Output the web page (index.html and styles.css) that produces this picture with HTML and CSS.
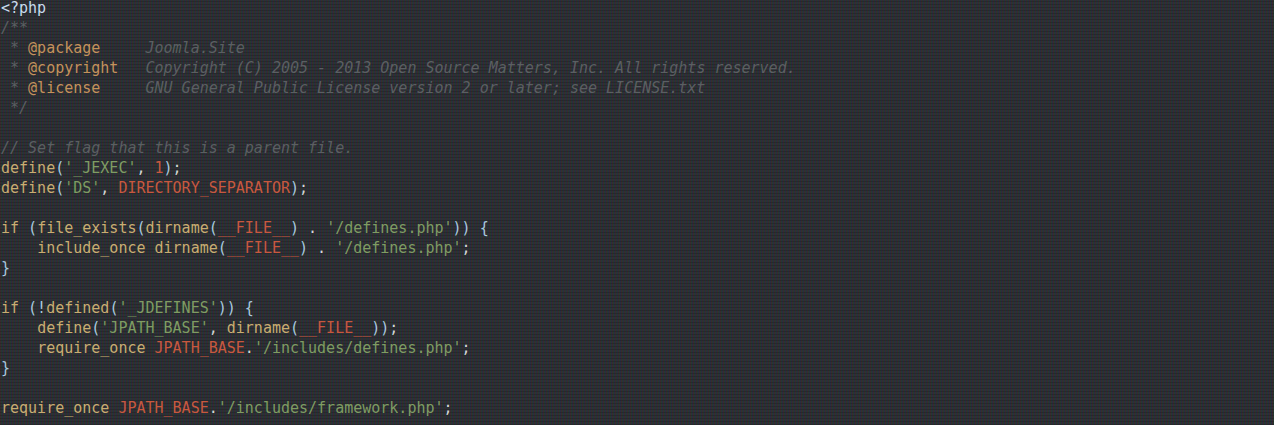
FILE: index.html
```html
<!DOCTYPE html>
<html>
<head>
<meta charset="utf-8">
<link rel="stylesheet" href="styles.css">
</head>
<body>
<pre class="code"><span class="tag">&lt;?php</span>
<span class="cm">/**</span>
<span class="cm"> * </span><span class="doc">@package</span><span class="cm">     Joomla.Site</span>
<span class="cm"> * </span><span class="doc">@copyright</span><span class="cm">   Copyright (C) 2005 - 2013 Open Source Matters, Inc. All rights reserved.</span>
<span class="cm"> * </span><span class="doc">@license</span><span class="cm">     GNU General Public License version 2 or later; see LICENSE.txt</span>
<span class="cm"> */</span>

<span class="cm">// Set flag that this is a parent file.</span>
<span class="fn">define</span><span class="p">(</span><span class="str">'_JEXEC'</span><span class="w">, </span><span class="con">1</span><span class="p">)</span><span class="w">;</span>
<span class="fn">define</span><span class="p">(</span><span class="str">'DS'</span><span class="w">, </span><span class="con">DIRECTORY_SEPARATOR</span><span class="p">)</span><span class="w">;</span>

<span class="fn">if</span> <span class="p">(</span><span class="fn">file_exists</span><span class="p">(</span><span class="fn">dirname</span><span class="p">(</span><span class="con">__FILE__</span><span class="p">)</span> <span class="w">.</span> <span class="str">'/defines.php'</span><span class="p">))</span> <span class="p">{</span>
    <span class="fn">include_once</span> <span class="fn">dirname</span><span class="p">(</span><span class="con">__FILE__</span><span class="p">)</span> <span class="w">.</span> <span class="str">'/defines.php'</span><span class="w">;</span>
<span class="p">}</span>

<span class="fn">if</span> <span class="p">(!</span><span class="fn">defined</span><span class="p">(</span><span class="str">'_JDEFINES'</span><span class="p">))</span> <span class="p">{</span>
    <span class="fn">define</span><span class="p">(</span><span class="str">'JPATH_BASE'</span><span class="w">, </span><span class="fn">dirname</span><span class="p">(</span><span class="con">__FILE__</span><span class="p">))</span><span class="w">;</span>
    <span class="fn">require_once</span> <span class="con">JPATH_BASE</span><span class="w">.</span><span class="str">'/includes/defines.php'</span><span class="w">;</span>
<span class="p">}</span>

<span class="fn">require_once</span> <span class="con">JPATH_BASE</span><span class="w">.</span><span class="str">'/includes/framework.php'</span><span class="w">;</span>
</pre>
</body>
</html>
```
FILE: styles.css
```css
html, body {
  margin: 0;
  padding: 0;
  height: 100%;
}
body {
  background-color: #24292b;
  background-image:
    repeating-linear-gradient(90deg,
      rgba(120, 40, 50, 0.22) 0px, rgba(120, 40, 50, 0.22) 1px,
      rgba(40, 110, 60, 0.18) 1px, rgba(40, 110, 60, 0.18) 2px,
      rgba(50, 50, 130, 0.22) 2px, rgba(50, 50, 130, 0.22) 3px),
    repeating-linear-gradient(0deg,
      rgba(0, 0, 0, 0.18) 0px, rgba(0, 0, 0, 0.18) 1px,
      rgba(255, 255, 255, 0.015) 1px, rgba(255, 255, 255, 0.015) 3px);
  overflow: hidden;
}
.code {
  margin: -2px 0 0 1px;
  padding: 0;
  font-family: "DejaVu Sans Mono", "Liberation Mono", monospace;
  font-size: 15px;
  line-height: 20px;
  color: #c9ad72;
  white-space: pre;
}
.tag { color: #c8dced; }
.cm { color: #5b5f62; font-style: italic; }
.doc { color: #c4925c; }
.fn { color: #c9ad72; }
.p { color: #a9c8df; }
.w { color: #d4d6d6; }
.str { color: #7f9c63; }
.con { color: #c8583f; }
```
